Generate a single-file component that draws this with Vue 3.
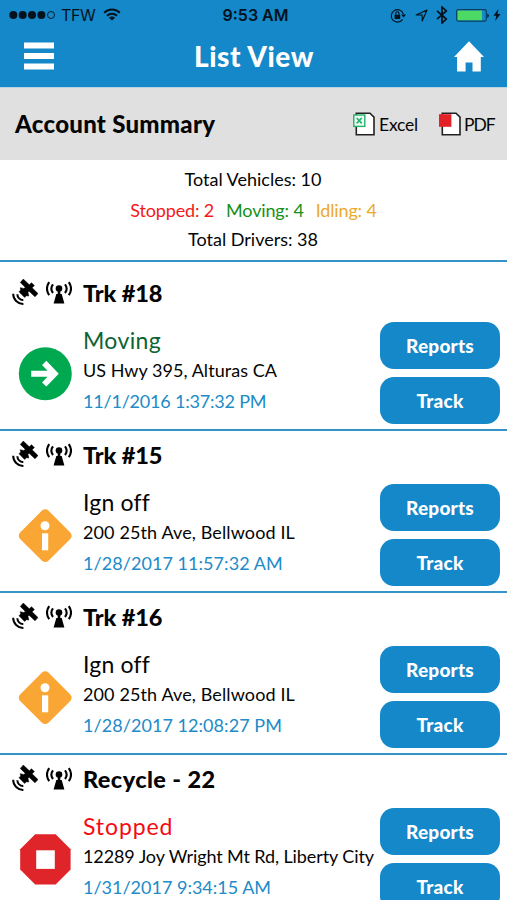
<script setup>
const vehicles = [
  { name: 'Trk #18', kind: 'moving', status: 'Moving', place: 'US Hwy 395, Alturas CA', time: '11/1/2016 1:37:32 PM' },
  { name: 'Trk #15', kind: 'idle', status: 'Ign off', place: '200 25th Ave, Bellwood IL', time: '1/28/2017 11:57:32 AM' },
  { name: 'Trk #16', kind: 'idle', status: 'Ign off', place: '200 25th Ave, Bellwood IL', time: '1/28/2017 12:08:27 PM' },
  { name: 'Recycle - 22', kind: 'stopped', status: 'Stopped', place: '12289 Joy Wright Mt Rd, Liberty City', time: '1/31/2017 9:34:15 AM' },
]
</script>

<template>
  <div class="screen">
    <div class="statusbar">
      <div class="carrier">
        <svg class="dots" width="47" height="10" viewBox="0 0 47 10">
          <circle cx="4.3" cy="5" r="4" /><circle cx="13.7" cy="5" r="4" /><circle cx="23" cy="5" r="4" /><circle cx="32.4" cy="5" r="4" />
          <circle cx="42" cy="5" r="3.5" fill="none" stroke="#03121d" stroke-width="0.9" />
        </svg>
        <span class="tfw">TFW</span>
        <svg class="wifi" width="18" height="13" viewBox="0 0 18 13" fill="none" stroke="#03121d" stroke-width="2">
          <path d="M1.2 4.8a11 11 0 0 1 15.6 0M4 7.8a7 7 0 0 1 10 0" />
          <path d="M9 12.6 5.9 9.7a4.4 4.4 0 0 1 6.2 0Z" fill="#03121d" stroke="none" />
        </svg>
      </div>
      <div class="clock">9:53 AM</div>
      <div class="indicators">
        <svg width="17" height="15" viewBox="0 0 17 15" fill="none" stroke="#03121d" stroke-width="1.1">
          <path d="M12.6 11.4A6.2 6.2 0 1 1 13.4 6" />
          <path d="M11.2 6.6h4.8l-2.4 3z" fill="#03121d" stroke="none" />
          <path d="M4.6 6.8h5.6v4.2H4.6z" fill="#03121d" stroke="none" /><path d="M5.8 7V5.4a1.6 1.6 0 0 1 3.2 0V7" />
        </svg>
        <svg class="nav" width="13" height="13" viewBox="0 0 13 13" fill="none" stroke="#03121d" stroke-width="1.1">
          <path d="M12 1 7.2 12V6H1.2z" stroke-linejoin="round" />
        </svg>
        <svg class="bt" width="12" height="18" viewBox="0 0 12 18" fill="none" stroke="#03121d" stroke-width="1.7">
          <path d="M1 4.8 10.3 13 6 17V1l4.3 4L1 13.2" />
        </svg>
        <svg class="battery" width="34" height="13" viewBox="0 0 34 13">
          <rect x="0.7" y="0.7" width="29.6" height="11.4" rx="1.5" fill="none" stroke="#073e5f" stroke-width="1.2" />
          <rect x="1.6" y="1.6" width="24.4" height="9.6" fill="#4cd964" />
          <path d="M31.4 4.4a2.6 2.6 0 0 1 0 4.6z" fill="#03121d" />
        </svg>
        <svg class="bolt" width="8" height="12" viewBox="0 0 8 12"><path d="M5.4 0 .5 6.8h2.8L2.2 12l5.3-7H4.6z" /></svg>
      </div>
    </div>

    <header class="header">
      <svg width="30" height="28" viewBox="0 0 30 28" fill="#fff"><path d="M0 0.5h30v6H0zM0 11h30v6H0zM0 21.5h30v6H0z" /></svg>
      <h1>List View</h1>
      <svg width="30" height="31" viewBox="0 0 30 31" fill="#fff"><path d="M15 .2 30 16h-3.2v14.5h-8.3V21.4h-6.9v9.1H3.1V16H0z" /></svg>
    </header>

    <section class="account">
      <h2>Account Summary</h2>
      <div class="export excel">
        <svg width="22" height="24" viewBox="0 0 22 24">
          <path d="M3.3 1.2H17l4 4V22.7H3.3z" fill="#fff" stroke="#222" stroke-width="1.6" />
          <rect x="0.8" y="3" width="11" height="11.4" fill="#effaf4" stroke="#21b26b" stroke-width="1.4" />
          <path d="m3.7 6 5 5.4m0-5.4-5 5.4" stroke="#21b26b" stroke-width="1.6" />
        </svg>
        <span>Excel</span>
      </div>
      <div class="export pdf">
        <svg width="22" height="24" viewBox="0 0 22 24">
          <path d="M3.3 1.2H17l4 4V22.7H3.3z" fill="#fff" stroke="#222" stroke-width="1.6" />
          <rect x="0" y="2.2" width="12.4" height="12.6" fill="#e32227" />
        </svg>
        <span>PDF</span>
      </div>
    </section>

    <section class="totals">
      <p class="vehicles">Total Vehicles: 10</p>
      <p class="states"><span class="s">Stopped: 2</span><span class="m">Moving: 4</span><span class="i">Idling: 4</span></p>
      <p class="drivers">Total Drivers: 38</p>
    </section>

    <main>
      <article v-for="v in vehicles" :key="v.name" class="row">
        <div class="title">
          <svg class="sat" width="26" height="26" viewBox="0 0 26 26">
            <path d="M11.3.1 17.3 5.8 19.5 3.7 22.4 6.6 20.1 8.8 26 14.6 23 17.8 17.1 12.3 16 13.4 16.8 17 14.4 16.8 12.6 18.4 7 12.8 8.7 11 8.2 8.7 11.6 9.4 13.4 8.4 8.3 3.5z" stroke="#000" stroke-width="0.5" />
            <path d="M5.4 15.2a5.6 5.6 0 0 0 5.9 5.8M1.2 14.8a10 10 0 0 0 10.2 10.2" fill="none" stroke="#000" stroke-width="2" />
          </svg>
          <svg class="ant" width="26" height="23" viewBox="0 0 26 23">
            <circle cx="13" cy="7.6" r="3.3" /><path d="M11.7 9h2.6v4h1.4L18.4 22.6H7.6L10.3 13h1.4z" />
            <path d="M7 3.4a7 7 0 0 0 0 8.6M19 3.4a7 7 0 0 1 0 8.6M3.2 1.2a11.5 11.5 0 0 0 0 13M22.8 1.2a11.5 11.5 0 0 1 0 13" fill="none" stroke="#000" stroke-width="2.1" />
          </svg>
          <h3>{{ v.name }}</h3>
        </div>
        <div class="body">
          <svg v-if="v.kind === 'moving'" class="badge" width="54" height="54" viewBox="0 0 54 54">
            <circle cx="27.3" cy="26.7" r="26.5" fill="#00a94f" />
            <path d="M13.2 26.7h23M26.2 15.9 36.6 26.7 26.2 37.5" fill="none" stroke="#fff" stroke-width="6" />
          </svg>
          <svg v-else-if="v.kind === 'idle'" class="badge" width="54" height="54" viewBox="0 0 54 54">
            <rect x="7.2" y="6.7" width="40" height="40" rx="4.5" transform="rotate(45 27.2 26.7)" fill="#faa634" />
            <circle cx="27" cy="16.7" r="4.5" fill="#fff" /><path d="M24 24.3h6.2v17H24z" fill="#fff" />
          </svg>
          <svg v-else class="badge" width="54" height="54" viewBox="0 0 54 54">
            <path d="M17.2 1.3h20.4L52.6 16.2v20.3L37.6 51.5H17.2L2.2 36.5V16.2z" fill="#df242a" />
            <path d="M18.2 17.3h18.6v18.6H18.2z" fill="#fff" />
          </svg>
          <div class="info">
            <div class="status" :class="v.kind">{{ v.status }}</div>
            <div class="place">{{ v.place }}</div>
            <div class="time">{{ v.time }}</div>
          </div>
          <div class="actions">
            <button>Reports</button>
            <button>Track</button>
          </div>
        </div>
      </article>
    </main>
  </div>
</template>

<style>
body { margin: 0; overflow: hidden; }
</style>

<style scoped>
.screen { width: 507px; height: 900px; overflow: hidden; background: #fff; color: #050505; font-family: Lato, sans-serif; }
h1, h2, h3, p { margin: 0; }
svg { flex: none; display: block; }
.statusbar { display: grid; grid-template-columns: 1fr auto 1fr; align-items: center; height: 30px; padding: 0 6px 0 9px; background: #1488c8; color: #03121d; fill: #03121d; font-family: Inter, sans-serif; box-sizing: border-box; }
.carrier { display: flex; align-items: center; }
.tfw { margin: 0 8px 0 5px; font-size: 16px; letter-spacing: -0.4px; }
.wifi { margin-bottom: 2px; }
.clock { font-size: 16px; font-weight: 600; padding-left: 1px; }
.indicators { display: flex; align-items: center; justify-content: flex-end; }
.nav { margin-left: 8px; }
.bt { margin-left: 8px; }
.battery { margin-left: 8px; }
.bolt { margin-left: 3px; }
.header { display: flex; align-items: center; justify-content: space-between; height: 57px; padding: 0 23px 5px 24px; box-sizing: border-box; background: #1488c8; color: #fff; }
.header h1 { font-size: 28px; line-height: 34px; font-weight: 900; letter-spacing: 0.55px; padding-bottom: 1px; }
.account { display: flex; align-items: center; height: 73px; padding-left: 15px; box-sizing: border-box; background: #e0e0e0; border-top: 1px solid #b9d3e0; }
.account h2 { flex: none; width: 338px; font-size: 24px; font-weight: 900; line-height: 30px; letter-spacing: 0.27px; }
.export { display: flex; align-items: center; gap: 4px; font-size: 17.5px; letter-spacing: -0.2px; }
.pdf { margin-left: 21px; gap: 3px; letter-spacing: -1px; }
.totals { height: 100px; padding-top: 4px; box-sizing: border-box; text-align: center; font-size: 18px; line-height: 30px; }
.vehicles, .drivers { padding-right: 1px; }
.states { display: flex; justify-content: center; gap: 12px; padding-top: 1px; margin-bottom: -1px; letter-spacing: -0.15px; }
.s { color: #f31820; }
.m { color: #159018; }
.i { color: #ecaa2b; }
.row { height: 162px; box-sizing: border-box; border-top: 2px solid #3593c7; }
.row:first-child { height: 169px; padding-top: 7px; }
.title { display: flex; align-items: center; height: 53px; padding: 0 0 7px 12px; box-sizing: border-box; }
.ant { margin: 0 11px 0 8px; }
.title h3 { padding-top: 2px; font-size: 23.5px; line-height: 24px; font-weight: 900; letter-spacing: -0.1px; }
.row:last-child h3 { letter-spacing: 0.4px; }
.body { display: flex; padding-left: 18px; }
.badge { margin-top: 25px; }
.info { flex: none; width: 297px; margin: 3px 0 0 11px; line-height: 30px; white-space: nowrap; }
.status { font-size: 23px; letter-spacing: 0.2px; }
.status.moving { color: #0c6334; letter-spacing: 0.35px; }
.status.stopped { color: #f40b12; letter-spacing: 0.9px; }
.place { font-size: 18px; letter-spacing: 0.12px; }
.time { padding-top: 1px; font-size: 18px; letter-spacing: 0.06px; color: #218bc7; }
.row:first-child .place { letter-spacing: 0.04px; }
.row:first-child .time { letter-spacing: -0.2px; }
.row:last-child .place { letter-spacing: -0.1px; }
.row:last-child .time { letter-spacing: 0; }
.actions { display: flex; flex-direction: column; gap: 8px; }
button { width: 120px; height: 47px; padding: 1px 0 0; border: 0; border-radius: 14px; background: #1488c8; color: #fff; font: 900 19px/46px Lato, sans-serif; letter-spacing: 0.2px; }
</style>
